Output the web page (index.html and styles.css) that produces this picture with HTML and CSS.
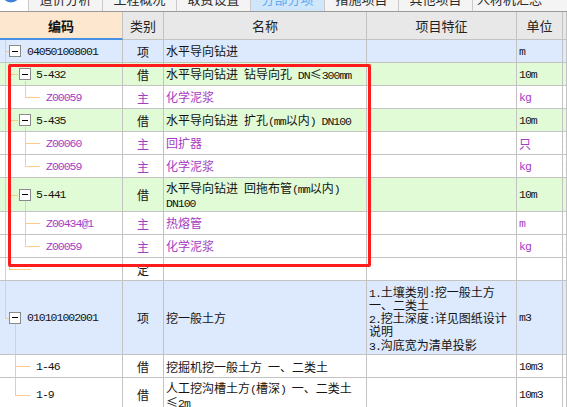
FILE: index.html
```html
<!DOCTYPE html>
<html lang="zh-CN">
<head>
<meta charset="utf-8">
<title>分部分项</title>
<link rel="stylesheet" href="styles.css">
</head>
<body>
<div class="app">
  <div class="tabs">
    <div class="logo">
      <svg width="20" height="20" viewBox="0 0 20 20"><circle cx="10" cy="10" r="9.5" fill="#3d7fd9"/><path d="M6 9.5 L10 13 L14 9.5" fill="none" stroke="#fff" stroke-width="2"/></svg>
    </div>
    <div class="tab"><span class="tab-label">造价分析</span></div>
    <div class="tab"><span class="tab-label">工程概况</span></div>
    <div class="tab"><span class="tab-label">取费设置</span></div>
    <div class="tab active"><span class="tab-label">分部分项</span></div>
    <div class="tab"><span class="tab-label">措施项目</span></div>
    <div class="tab"><span class="tab-label">其他项目</span></div>
    <div class="tab"><span class="tab-label">人材机汇总</span></div>
  </div>

  <div class="grid">
    <div class="row head">
      <div class="c h-code">编码</div>
      <div class="c center">类别</div>
      <div class="c center">名称</div>
      <div class="c center">项目特征</div>
      <div class="c center">单位</div>
      <div class="c"></div>
    </div>

    <div class="row blue">
      <div class="c code t-top"><div class="code-in lv0"><span class="tg"></span><span class="lat">040501008001</span></div></div>
      <div class="c center">项</div>
      <div class="c name"><span class="tx">水平导向钻进</span></div>
      <div class="c feat"></div>
      <div class="c unit"><span class="lat">m</span></div>
      <div class="c"></div>
    </div>

    <div class="row green">
      <div class="c code t-l1p"><div class="code-in lv1"><span class="tg"></span><span class="lat">5-432</span></div></div>
      <div class="c center">借</div>
      <div class="c name"><span class="tx">水平导向钻进<span class="lat"> </span>钻导向孔<span class="lat"> DN</span>≤<span class="lat">300mm</span></span></div>
      <div class="c feat"></div>
      <div class="c unit"><span class="lat">10m</span></div>
      <div class="c"></div>
    </div>

    <div class="row purple">
      <div class="c code t-l2l"><div class="code-in lf2"><span class="lat">Z00059</span></div></div>
      <div class="c center">主</div>
      <div class="c name"><span class="tx">化学泥浆</span></div>
      <div class="c feat"></div>
      <div class="c unit"><span class="lat">kg</span></div>
      <div class="c"></div>
    </div>

    <div class="row green">
      <div class="c code t-l1p"><div class="code-in lv1"><span class="tg"></span><span class="lat">5-435</span></div></div>
      <div class="c center">借</div>
      <div class="c name"><span class="tx">水平导向钻进<span class="lat"> </span>扩孔<span class="lat">(mm</span>以内<span class="lat">) DN100</span></span></div>
      <div class="c feat"></div>
      <div class="c unit"><span class="lat">10m</span></div>
      <div class="c"></div>
    </div>

    <div class="row purple">
      <div class="c code t-l2m"><div class="code-in lf2"><span class="lat">Z00060</span></div></div>
      <div class="c center">主</div>
      <div class="c name"><span class="tx">回扩器</span></div>
      <div class="c feat"></div>
      <div class="c unit"><span class="tx">只</span></div>
      <div class="c extra"><span class="lat">1</span></div>
    </div>

    <div class="row purple">
      <div class="c code t-l2l"><div class="code-in lf2"><span class="lat">Z00059</span></div></div>
      <div class="c center">主</div>
      <div class="c name"><span class="tx">化学泥浆</span></div>
      <div class="c feat"></div>
      <div class="c unit"><span class="lat">kg</span></div>
      <div class="c extra"><span class="lat">1</span></div>
    </div>

    <div class="row green">
      <div class="c code t-l1p"><div class="code-in lv1"><span class="tg"></span><span class="lat">5-441</span></div></div>
      <div class="c center">借</div>
      <div class="c name two"><span class="tx">水平导向钻进<span class="lat"> </span>回拖布管<span class="lat">(mm</span>以内<span class="lat">)</span><br><span class="lat">DN100</span></span></div>
      <div class="c feat"></div>
      <div class="c unit"><span class="lat">10m</span></div>
      <div class="c"></div>
    </div>

    <div class="row purple">
      <div class="c code t-l2m"><div class="code-in lf2"><span class="lat">Z00434@1</span></div></div>
      <div class="c center">主</div>
      <div class="c name"><span class="tx">热熔管</span></div>
      <div class="c feat"></div>
      <div class="c unit"><span class="lat">m</span></div>
      <div class="c"></div>
    </div>

    <div class="row purple">
      <div class="c code t-l2l"><div class="code-in lf2"><span class="lat">Z00059</span></div></div>
      <div class="c center">主</div>
      <div class="c name"><span class="tx">化学泥浆</span></div>
      <div class="c feat"></div>
      <div class="c unit"><span class="lat">kg</span></div>
      <div class="c extra"><span class="lat">1</span></div>
    </div>

    <div class="row">
      <div class="c code t-def"></div>
      <div class="c center">定</div>
      <div class="c name"></div>
      <div class="c feat"></div>
      <div class="c unit"></div>
      <div class="c"></div>
    </div>

    <div class="row blue">
      <div class="c code t-top2"><div class="code-in lv0"><span class="tg"></span><span class="lat">010101002001</span></div></div>
      <div class="c center">项</div>
      <div class="c name"><span class="tx">挖一般土方</span></div>
      <div class="c feat multi"><span class="tx"><span class="lat">1.</span>土壤类别<span class="lat">:</span>挖一般土方<br>一、二类土<br><span class="lat">2.</span>挖土深度<span class="lat">:</span>详见图纸设计<br>说明<br><span class="lat">3.</span>沟底宽为清单投影</span></div>
      <div class="c unit"><span class="lat">m3</span></div>
      <div class="c"></div>
    </div>

    <div class="row">
      <div class="c code t-l1m"><div class="code-in lf1"><span class="lat">1-46</span></div></div>
      <div class="c center">借</div>
      <div class="c name"><span class="tx">挖掘机挖一般土方<span class="lat"> </span>一、二类土</span></div>
      <div class="c feat"></div>
      <div class="c unit"><span class="lat">10m3</span></div>
      <div class="c"></div>
    </div>

    <div class="row">
      <div class="c code t-l1l"><div class="code-in lf1"><span class="lat">1-9</span></div></div>
      <div class="c center">借</div>
      <div class="c name two"><span class="tx">人工挖沟槽土方<span class="lat">(</span>槽深<span class="lat">) </span>一、二类土<br>≤<span class="lat">2m</span></span></div>
      <div class="c feat"></div>
      <div class="c unit"><span class="lat">10m3</span></div>
      <div class="c"></div>
    </div>
  </div>

  <div class="redbox"></div>
</div>
</body>
</html>
```

FILE: styles.css
```css
html, body {
  margin: 0;
  padding: 0;
  background: #ffffff;
  overflow: hidden;
}

.app {
  position: relative;
  width: 567px;
  height: 407px;
  overflow: hidden;
  font-family: "Noto Sans CJK SC", "Liberation Sans", sans-serif;
  font-size: 12px;
  color: #141414;
  --tl: #ffc98a;
  --grid: #c3c3c3;
}

/* ---------- tabs ---------- */
.tabs {
  display: flex;
  height: 11px;
  border-bottom: 1px solid #9a9a9a;
  background: #f4f4f4;
  overflow: hidden;
}

.logo {
  width: 28px;
  flex: none;
  background: #ffffff;
  display: flex;
  justify-content: flex-start;
}

.logo svg {
  margin-top: -17px;
  margin-left: 1px;
}

.tab {
  width: 73px;
  flex: none;
  border-left: 1px solid #c9c9c9;
  background: #f4f4f4;
  display: flex;
  justify-content: center;
  font-size: 13px;
  color: #2a2a2a;
}

.tab.active {
  background: #cfe6fb;
  color: #5aaaf0;
}

.tab-label {
  line-height: 13px;
  margin-top: -8px;
  white-space: nowrap;
}

/* ---------- grid ---------- */
.row {
  display: grid;
  grid-template-columns: 123px 41px 203px 150px 46px 1fr;
}

.c {
  box-sizing: border-box;
  min-height: 23px;
  border-right: 1px solid var(--grid);
  border-bottom: 1px solid var(--grid);
  display: flex;
  align-items: center;
  white-space: nowrap;
  overflow: hidden;
}

.head .c {
  height: 28px;
  background: #e8e8e8;
  justify-content: center;
  font-size: 13px;
  color: #222;
}

.head .h-code {
  background: #fde7cf;
  font-weight: bold;
  border-bottom: 2px solid #4a90e2;
  color: #111;
}

.center {
  justify-content: center;
}

.blue .c { background-color: #dde9fc; }
.green .c { background-color: #e1fbd6; }

.purple .center,
.purple .name,
.purple .unit,
.purple .code .lat,
.extra {
  color: #a63cc2;
}

.tx {
  display: block;
  white-space: nowrap;
}

.tx .lat {
  line-height: 0;
}

.name {
  padding: 0 2px;
  line-height: 13.5px;
}

.name.two {
  padding-top: 3px;
  padding-bottom: 3px;
}

.feat {
  padding: 0 2px;
}

.feat.multi {
  padding: 3.5px 2px;
  line-height: 13.3px;
}

.unit {
  padding-left: 2px;
}

.extra {
  padding-left: 2px;
}

.lat {
  font-family: "Liberation Mono", monospace;
  font-size: 11.5px;
  letter-spacing: -1px;
  white-space: pre;
}

/* ---------- tree ---------- */
.code {
  background-repeat: no-repeat;
  background-origin: border-box;
}

.code-in {
  display: flex;
  align-items: center;
}

.code-in.lv0 { padding-left: 9px; }
.code-in.lv0 .tg { margin-right: 6px; }
.code-in.lv1 { padding-left: 19px; }
.code-in.lv1 .tg { margin-right: 5px; }
.code-in.lf2 { padding-left: 46px; }
.code-in.lf1 { padding-left: 36px; }

.tg {
  width: 12px;
  height: 12px;
  box-sizing: border-box;
  border: 1px solid #8a8a8a;
  background: #ffffff;
  display: flex;
  align-items: center;
  justify-content: center;
  flex: none;
}

.tg::before {
  content: "";
  width: 6px;
  height: 1px;
  background: #000;
}

/* top-level item with root line through */
.t-top {
  background-image:
    linear-gradient(var(--tl), var(--tl)),
    linear-gradient(var(--tl), var(--tl));
  background-size: 1px 100%, 4px 1px;
  background-position: 5px 0, 5px 50%;
}

/* level-1 parent (expanded) */
.t-l1p {
  background-image:
    linear-gradient(var(--tl), var(--tl)),
    linear-gradient(var(--tl), var(--tl)),
    linear-gradient(var(--tl), var(--tl)),
    linear-gradient(var(--tl), var(--tl));
  background-size: 1px 100%, 1px 100%, 9px 1px, 1px calc(50% - 6px);
  background-position: 5px 0, 9px 0, 9px 50%, 25px 100%;
}

/* level-2 middle leaf */
.t-l2m {
  background-image:
    linear-gradient(var(--tl), var(--tl)),
    linear-gradient(var(--tl), var(--tl)),
    linear-gradient(var(--tl), var(--tl)),
    linear-gradient(var(--tl), var(--tl));
  background-size: 1px 100%, 1px 100%, 1px 100%, 15px 1px;
  background-position: 5px 0, 9px 0, 25px 0, 25px 50%;
}

/* level-2 last leaf */
.t-l2l {
  background-image:
    linear-gradient(var(--tl), var(--tl)),
    linear-gradient(var(--tl), var(--tl)),
    linear-gradient(var(--tl), var(--tl)),
    linear-gradient(var(--tl), var(--tl));
  background-size: 1px 100%, 1px 100%, 1px 50%, 15px 1px;
  background-position: 5px 0, 9px 0, 25px 0, 25px 50%;
}

/* empty 定 row: last level-1 leaf */
.t-def {
  background-image:
    linear-gradient(var(--tl), var(--tl)),
    linear-gradient(var(--tl), var(--tl)),
    linear-gradient(var(--tl), var(--tl));
  background-size: 1px 100%, 1px 50%, 22px 1px;
  background-position: 5px 0, 9px 0, 9px 50%;
}

/* last top-level item */
.t-top2 {
  background-image:
    linear-gradient(var(--tl), var(--tl)),
    linear-gradient(var(--tl), var(--tl)),
    linear-gradient(var(--tl), var(--tl));
  background-size: 1px 50%, 4px 1px, 1px calc(50% - 6px);
  background-position: 5px 0, 5px 50%, 15px 100%;
}

/* level-1 leaf, middle */
.t-l1m {
  background-image:
    linear-gradient(var(--tl), var(--tl)),
    linear-gradient(var(--tl), var(--tl));
  background-size: 1px 100%, 15px 1px;
  background-position: 15px 0, 15px 50%;
}

/* level-1 leaf, last */
.t-l1l {
  background-image:
    linear-gradient(var(--tl), var(--tl)),
    linear-gradient(var(--tl), var(--tl));
  background-size: 1px 50%, 15px 1px;
  background-position: 15px 0, 15px 50%;
}

/* ---------- highlight overlay ---------- */
.redbox {
  position: absolute;
  left: 8px;
  top: 64px;
  width: 363px;
  height: 203px;
  box-sizing: border-box;
  border: 3px solid #ff1c1c;
  border-radius: 2px;
  pointer-events: none;
}
```
